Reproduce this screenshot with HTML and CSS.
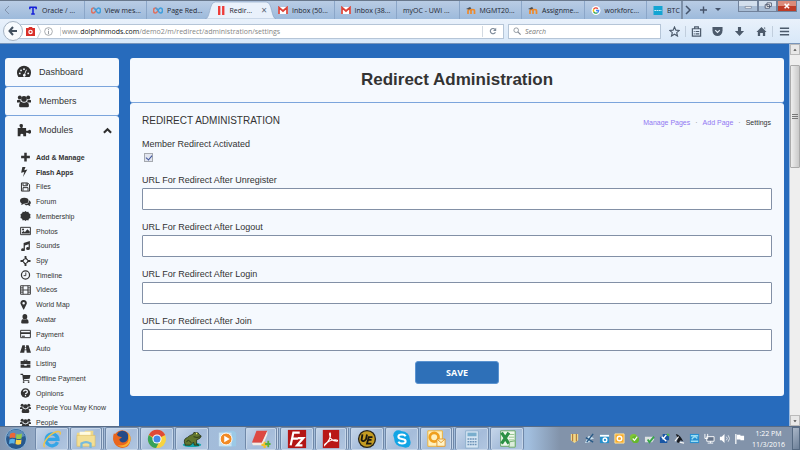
FILE: index.html
```html
<!DOCTYPE html>
<html lang="en">
<head>
    <meta charset="UTF-8">
    <meta name="viewport" content="width=device-width, initial-scale=1.0">
    <title>Redirect Administration</title>
    <link rel="stylesheet" href="styles.css">
</head>
<body>

    <!-- Shared icon shapes -->
    <svg class="sprite" aria-hidden="true">
        <symbol id="loop" viewBox="0 0 20 14"><path d="M10 7C8 3 6 2 5 2a4 5 0 0 0 0 10c2 0 3-2 5-5" fill="none" stroke="#e0705f" stroke-width="3"/><path d="M10 7c2-4 4-5 5-5a4 5 0 0 1 0 10c-2 0-3-1-5-5S6 2 5 2" fill="none" stroke="#3f9fdc" stroke-width="3"/></symbol>
        <symbol id="gmail" viewBox="0 0 20 16"><path fill="#fff" d="M1 1h18v14H1z"/><path d="M2 15V2l8 7 8-7v13" fill="none" stroke="#dd4338" stroke-width="3.4"/></symbol>
        <symbol id="moodle" viewBox="0 0 20 14"><path d="M4 14V8q0-3 3-3t3 3v6M10 14V8q0-3 3.500-3T17 8v6" fill="none" stroke="#ee8a2c" stroke-width="3.4"/><path fill="#4d4f52" d="M0 4l8-4 3 3-5 2z"/></symbol>
        <symbol id="group" viewBox="0 0 20 18"><circle cx="4" cy="4" r="2.800"/><circle cx="16" cy="4" r="2.800"/><circle cx="10" cy="6" r="4"/><path d="M0 11V8q2-1.500 5 0 0 2 1 3H2zM20 11V8q-2-1.500-5 0 0 2-1 3h4zM3 16q0-5 3-6 4 3 8 0 3 1 3 6 0 2-2 2H5q-2 0-2-2z"/></symbol>
    </svg>

    <!-- Browser tabs -->
    <nav class="tab-bar">
        <button class="scroll-tabs" aria-label="Scroll tabs left"><svg viewBox="0 0 8 10"><path d="M6 1L2 5l4 4" fill="none" stroke="#8294ad"/></svg></button>
        <div class="tabs">
            <button class="tab"><svg viewBox="0 0 10 10"><path d="M1 1.500h8M1.500 1v2.500M8.500 1v2.500M5 1v8M3 9h4" stroke="#1620d8" stroke-width="1.700"/></svg>Oracle / ...</button>
            <button class="tab"><svg><use href="#loop"/></svg>View mes...</button>
            <button class="tab no-line"><svg><use href="#loop"/></svg>Page Red...</button>
            <button class="tab active">
                <svg class="tab-shape" viewBox="0 0 76 18" preserveAspectRatio="none"><path d="M0 18C6 18 4 1 11 1h54c7 0 5 17 11 17z" fill="#e9f1fb" stroke="#8ea7c6" stroke-width=".7"/></svg>
                <svg viewBox="0 0 10 10"><path d="M3 0v10M7.500 0v10" stroke="#ee3b38" stroke-width="2.600"/></svg>Redir...<span class="close">×</span>
            </button>
            <button class="tab"><svg><use href="#gmail"/></svg>Inbox (50...</button>
            <button class="tab"><svg><use href="#gmail"/></svg>Inbox (38...</button>
            <button class="tab">myOC - UWI ...</button>
            <button class="tab"><svg><use href="#moodle"/></svg>MGMT20...</button>
            <button class="tab"><svg><use href="#moodle"/></svg>Assignme...</button>
            <button class="tab"><svg viewBox="0 0 20 20"><circle cx="10" cy="10" r="10" fill="#fff"/><g fill="none" stroke-width="3"><path d="M14 6a5.600 5.600 0 0 0-9 1" stroke="#ea4335"/><path d="M5 7a6 6 0 0 0 0 6" stroke="#fbbc05"/><path d="M5 13a5.600 5.600 0 0 0 8 2" stroke="#34a853"/><path d="M13 15q3-2 3-5h-6" stroke="#4285f4"/></g></svg>workforc...</button>
        </div>
        <button class="tab cut"><svg viewBox="0 0 10 10"><path fill="#14a5d3" d="M0 0h10v10H0z"/><path d="M1 5h8" stroke="#d6f4fb" stroke-dasharray="2 .5"/></svg>BTC :</button>
        <div class="tab-tools">
            <button aria-label="Scroll tabs right"><svg viewBox="0 0 10 10"><path d="M3 1l4 4-4 4" fill="none" stroke="#45536a" stroke-width="1.500"/></svg></button>
            <button aria-label="New tab"><svg viewBox="0 0 10 10"><path d="M2 5h7M5.500 1.500v7" stroke="#45536a" stroke-width="1.400"/></svg></button>
            <button aria-label="List all tabs"><svg viewBox="0 0 10 10"><path d="M2 3h6L5 6z" fill="#45536a"/></svg></button>
        </div>
        <div class="window-buttons">
            <button aria-label="Minimize"><svg viewBox="0 0 20 10"><path d="M7 5.500h7v2H7z" fill="#fff" stroke="#596579" stroke-width=".6"/></svg></button>
            <button aria-label="Restore"><svg viewBox="0 0 20 10"><path d="M9 1.500h5v4H9zM7 3.500h5v4H7z" fill="#fff" stroke="#495369"/></svg></button>
            <button class="close-window" aria-label="Close"><svg viewBox="0 0 20 10"><path d="M7.500 2.500l5 5m0-5l-5 5" stroke="#fff" stroke-width="1.800"/></svg></button>
        </div>
    </nav>

    <!-- Address bar -->
    <header class="toolbar">
        <button class="back" aria-label="Back"><svg viewBox="0 0 10 10"><path d="M9 5H2M5 1L1.500 5 5 9" fill="none" stroke="#42505f" stroke-width="2"/></svg></button>
        <div class="address">
            <svg class="badge" viewBox="0 0 10 10"><path fill="#d9302a" d="M0 1h3V0h4v1h3v9H0z"/><circle cx="5" cy="5.500" r="2.500" fill="#fff"/><circle cx="5" cy="5.500" r="1.200" fill="#d9302a"/></svg>
            <svg class="divider" viewBox="0 0 5 16"><path d="M0 0l4 8-4 8" fill="none" stroke="#b8c0c9"/></svg>
            <svg class="info" viewBox="0 0 10 10"><circle cx="5" cy="5" r="4.300" fill="none" stroke="#8b9095" stroke-width=".8"/><path d="M5 2v1.200M5 4.200V8" stroke="#8b9095"/></svg>
            <div class="url">www.<b>dolphinmods.com</b>/demo2/m/redirect/administration/settings</div>
            <button class="reload" aria-label="Reload"><svg viewBox="0 0 10 10"><path d="M8 6.500A3.300 3.300 0 1 1 7.500 3" fill="none" stroke="#7d8a99" stroke-width="1.500"/><path d="M9 1v4H5z" fill="#7d8a99"/></svg></button>
        </div>
        <div class="search">
            <svg viewBox="0 0 10 10"><circle cx="4" cy="4" r="2.900" fill="none" stroke="#7e8690"/><path d="M6 6l3.500 3.500" stroke="#7e8690" stroke-width="1.400"/></svg>
            <input type="search" aria-label="Search" placeholder="Search">
        </div>
        <div class="actions">
            <button aria-label="Bookmark"><svg viewBox="0 0 12 12"><path d="M6 1l1.500 3.500 3.800.3-2.900 2.500.9 3.700L6 9l-3.300 2 .9-3.700L.7 4.800l3.800-.3z" fill="none" stroke="#4c5a6b" stroke-width="1.200"/></svg></button>
            <button class="lined" aria-label="Bookmarks list"><svg viewBox="0 0 12 12"><path d="M1.500 3h9v8h-9zM4 3V1h4v2M3 6h1M5 6h4M3 8.500h1M5 8.500h4" fill="none" stroke="#4c5a6b" stroke-width="1.300"/></svg></button>
            <button aria-label="Pocket"><svg viewBox="0 0 12 12"><path d="M.5 1h11v4a5.500 6 0 0 1-11 0z" fill="#4c5a6b"/><path d="M3.500 4.500L6 7l2.500-2.500" fill="none" stroke="#e3edf8" stroke-width="1.400"/></svg></button>
            <button aria-label="Downloads"><svg viewBox="0 0 12 12"><path d="M4.300 1h3.400v4.500H11L6 11 1 5.500h3.300z" fill="#4c5a6b"/></svg></button>
            <button aria-label="Home"><svg viewBox="0 0 12 12"><path d="M6 1l5.500 5.500H10V11H7.500V7.500h-3V11H2V6.500H.5zM8.500 1.500H10V4z" fill="#4c5a6b"/></svg></button>
            <button class="lined menu" aria-label="Menu"><svg viewBox="0 0 12 12"><path d="M1 2.500h10M1 6h10M1 9.500h10" stroke="#4c5a6b" stroke-width="1.800"/></svg></button>
        </div>
    </header>

    <div class="viewport">
        <div class="page">
            <!-- Admin menu -->
            <aside class="sidebar">
                <a class="menu-item" href="#"><svg viewBox="0 0 20 16"><path d="M2 15A10 10 0 1 1 18 15z"/><g fill="#f5f9fe"><circle cx="4" cy="10" r="1.300"/><circle cx="5.800" cy="5.700" r="1.300"/><circle cx="10" cy="4" r="1.300"/><circle cx="16" cy="10" r="1.300"/><path d="M13 4.500l1 .5-2.500 6a2 2 0 1 1-1.200-.3z"/></g></svg>Dashboard</a>
                <a class="menu-item" href="#"><svg><use href="#group"/></svg>Members</a>
                <div class="modules">
                    <a class="menu-item" href="#"><svg viewBox="0 0 20 18"><path d="M1 6h4.500Q3.500 4 3.500 2.500q0-2 2.500-2t2.500 2Q8.500 4 7.500 6H13v4q2.500.5 3.500-.7 2-1.300 3.500.7v3q-1.500 2-3.500.7-1-1.200-3.500-.7v5H9q.8-3.500-2-3.500T5 18H1z"/></svg>Modules<svg class="chevron" viewBox="0 0 10 10"><path d="M1 7.500l4-4 4 4" fill="none" stroke="#2f2f2f" stroke-width="2.300"/></svg></a>
                    <ul class="submenu">
                        <li class="strong"><a href="#"><svg viewBox="0 0 16 16"><path d="M6 1h4v5h5v4h-5v5H6v-5H1V6h5z"/></svg>Add &amp; Manage</a></li>
                        <li class="strong"><a href="#"><svg viewBox="0 0 16 16"><path d="M3 0h5L6 5l5-1-7 12 2-8-5 1z"/></svg>Flash Apps</a></li>
                        <li><a href="#"><svg viewBox="0 0 16 16"><path d="M1.500 1.500h10l3 3v10h-13zM4 2v4h7V2M4 14V9h8v5M9 2v3" fill="none" stroke="#333" stroke-width="1.600"/></svg>Files</a></li>
                        <li><a href="#"><svg viewBox="0 0 18 16"><ellipse cx="7" cy="6" rx="7" ry="5"/><path d="M3 9l-1 4 5-2zM15 5c4 3 3 6 1 7l1 3-4-2c-3 .5-5-.5-6-1.500 5 0 8-2 8-6.500z"/></svg>Forum</a></li>
                        <li><a href="#"><svg viewBox="0 0 16 16"><path d="M8 0l2 1.500 2.500-.5 1 2.500L16 5l-.5 3 .5 3-2.500 1.500-1 2.500-2.500-.5L8 16l-2-1.500-2.500.5-1-2.500L0 11l.5-3L0 5l2.500-1.500 1-2.500L6 1.500z"/></svg>Membership</a></li>
                        <li><a href="#"><svg viewBox="0 0 18 16"><path d="M1 2h16v12H1z" fill="none" stroke="#333" stroke-width="1.600"/><circle cx="5" cy="5.500" r="1.700"/><path d="M3 12v-2l3-2 2 2 4-5 4 4v3z"/></svg>Photos</a></li>
                        <li><a href="#"><svg viewBox="0 0 16 16"><path d="M5 3l10-3v12a3 2.300 0 1 1-2-2V5L7 7v7a3 2.300 0 1 1-2-2z"/></svg>Sounds</a></li>
                        <li><a href="#"><svg viewBox="0 0 16 16"><path d="M8 3L13 8 8 13 3 8z" fill="none" stroke="#333" stroke-width="2" stroke-dasharray="5 2"/><path d="M6.500 0h3v5h-3zM6.500 11h3v5h-3zM0 6.500h5v3H0zM11 6.500h5v3h-5z"/></svg>Spy</a></li>
                        <li><a href="#"><svg viewBox="0 0 16 16"><circle cx="8" cy="8" r="6.500" fill="none" stroke="#333" stroke-width="2"/><path d="M8.500 4v5H5" fill="none" stroke="#333" stroke-width="1.500"/></svg>Timeline</a></li>
                        <li><a href="#"><svg viewBox="0 0 18 16"><path d="M1 1h16v14H1zM5 1v14M13 1v14M5 8h8M1 4.500h4M1 8h4M1 11.500h4M13 4.500h4M13 8h4M13 11.500h4" fill="none" stroke="#333" stroke-width="1.500"/></svg>Videos</a></li>
                        <li><a href="#"><svg viewBox="0 0 16 16"><path d="M5 0a5 5 0 0 1 5 6L5.500 15h-1L0 6a5 5 0 0 1 5-6zm0 3a2 2 0 1 0 0 4 2 2 0 0 0 0-4z"/></svg>World Map</a></li>
                        <li><a href="#"><svg viewBox="0 0 16 16"><ellipse cx="7" cy="4.500" rx="3.800" ry="4.500"/><path d="M1 13q0-4 3-5 3 3 6 0 3 1 3 5 0 2-2 2H3q-2 0-2-2z"/></svg>Avatar</a></li>
                        <li><a href="#"><svg viewBox="0 0 18 16"><path d="M1 2h16v12H1z" fill="none" stroke="#333" stroke-width="1.600"/><path d="M1 5h16v3H1zM3 11h5v1.300H3z"/></svg>Payment</a></li>
                        <li><a href="#"><svg viewBox="0 0 18 16"><path d="M4 2h4v3h2V2h4l4 12h-7l-.5-4h-3L7 14H0zM8 6l-.3 3h2.600L10 6z"/></svg>Auto</a></li>
                        <li><a href="#"><svg viewBox="0 0 18 16"><path d="M6 3V1h6v2h5v5H1V3zM7.500 3h3v-.8h-3zM1 9h6v2h4V9h6v5H1z"/></svg>Listing</a></li>
                        <li><a href="#"><svg viewBox="0 0 16 16"><path d="M0 1h4l.5 2H16l-1.500 6-9 1v1H14v1.500H4L3 3H0z"/><circle cx="5" cy="14.500" r="1.500"/><circle cx="13" cy="14.500" r="1.500"/></svg>Offline Payment</a></li>
                        <li><a href="#"><svg viewBox="0 0 16 16"><circle cx="8" cy="8" r="7.500"/><path d="M5 6q0-2.500 3-2.500T11 6q0 1.500-1.500 2.200T8 10M8 11v2" fill="none" stroke="#f5f9fe" stroke-width="2"/></svg>Opinions</a></li>
                        <li><a href="#"><svg><use href="#group"/></svg>People You May Know</a></li>
                        <li><a href="#"><svg><use href="#group"/></svg>People</a></li>
                    </ul>
                </div>
            </aside>

            <!-- Settings form -->
            <main class="content">
                <h1>Redirect Administration</h1>
                <section class="panel">
                    <div class="panel-head">
                        <h2>REDIRECT ADMINISTRATION</h2>
                        <div class="links"><a href="#">Manage Pages</a><span>·</span><a href="#">Add Page</a><span>·</span><a class="current" href="#">Settings</a></div>
                    </div>
                    <form>
                        <div class="check-field">
                            <label for="activated">Member Redirect Activated</label>
                            <input type="checkbox" id="activated" checked>
                        </div>
                        <div class="field">
                            <label for="unregister">URL For Redirect After Unregister</label>
                            <input type="text" id="unregister">
                        </div>
                        <div class="field">
                            <label for="logout">URL For Redirect After Logout</label>
                            <input type="text" id="logout">
                        </div>
                        <div class="field">
                            <label for="login">URL For Redirect After Login</label>
                            <input type="text" id="login">
                        </div>
                        <div class="field">
                            <label for="join">URL For Redirect After Join</label>
                            <input type="text" id="join">
                        </div>
                        <button type="button" class="save">SAVE</button>
                    </form>
                </section>
            </main>
        </div>
        <div class="scrollbar">
            <button aria-label="Scroll up"><svg viewBox="0 0 10 10"><path d="M3 6l2-2.500L7 6z" fill="#444"/></svg></button>
            <div class="thumb"><svg viewBox="0 0 6 6"><path d="M0 .5h6M0 2.500h6M0 4.500h6" stroke="#777" stroke-width="1"/></svg></div>
            <button aria-label="Scroll down"><svg viewBox="0 0 10 10"><path d="M3 4l2 2.500L7 4z" fill="#444"/></svg></button>
        </div>
    </div>

    <!-- Taskbar -->
    <footer class="taskbar">
        <button class="start" aria-label="Start"><svg viewBox="0 0 22 22"><circle cx="11" cy="11" r="10.500" fill="#28588d" stroke="#8bb5d9"/><path d="M2 8a9.500 9.500 0 0 1 18 0q-9 4-18 0z" fill="#75a3cb" opacity=".7"/><path d="M5 6q3-2 5.500-.5L10 10q-3-1-5.500.5z" fill="#ed6736"/><path d="M11.500 6q2.500 1 5.500-.5l-.5 5q-3 1-5.500 0z" fill="#93c94b"/><path d="M4.500 11.500q3-1.500 5.500-.3l-.5 4.500Q7 14.500 4 16z" fill="#57b1e8"/><path d="M11 11.500q2.500 1 5.500 0L16 16q-3 1.500-5.500 0z" fill="#fbd04b"/></svg></button>
        <button class="app" aria-label="Internet Explorer"><svg viewBox="0 0 22 22"><path d="M17 14.500a6.500 6.500 0 1 1 .5-3H6" fill="none" stroke="#35a5e6" stroke-width="3.600"/><path d="M3 20C-1 17 8 5 16 3q5-1 4 3" fill="none" stroke="#efc44c" stroke-width="1.700"/></svg></button>
        <button class="app stacked" aria-label="Explorer"><svg viewBox="0 0 22 22"><path d="M1 4h8l1-2h9v14H1z" fill="#eed889"/><path d="M4 3h12v9H4z" fill="#fffbe0"/><path d="M1 7h20v12H1z" fill="#f3df95" stroke="#dcbc62" stroke-width=".7"/><path d="M6 21v-5q5-3 10 0v5" fill="none" stroke="#76badc" stroke-width="2.500"/></svg></button>
        <button class="app" aria-label="Firefox"><svg viewBox="0 0 22 22"><circle cx="11" cy="11" r="9.500" fill="#e7651b"/><circle cx="11.500" cy="8.500" r="6.500" fill="#254b88"/><path d="M2 5q3 0 5 3l4 1q-2 2-3 2 1 5 6 4 4-1 5-6 3 8-4 11-8 2-12-4-3-5-1-11z" fill="#e9661e"/><path d="M18 4q5 7 0 13-5 5-12 1 10 1 12-5z" fill="#fbb431"/></svg></button>
        <button class="app" aria-label="Chrome"><svg viewBox="0 0 22 22"><circle cx="11" cy="11" r="10" fill="#f7d341"/><path d="M11 11L2 6.500a10 10 0 0 1 18 0z" fill="#df4937"/><path d="M2 6.500a10 10 0 0 0 8 14.500l4-8-5-1z" fill="#38a25a"/><circle cx="11" cy="11" r="5" fill="#fff"/><circle cx="11" cy="11" r="3.900" fill="#4389e8"/></svg></button>
        <button class="app" aria-label="Toad"><svg viewBox="0 0 26 22"><ellipse cx="13" cy="18.500" rx="12" ry="3" fill="#14a7ad"/><path d="M4 18q-3-7 3-9 3-3 7-4 1-4 4-2 4-1 4 2l3 2q-1 4-6 5v6l3 1h-6l-1-4-4 4H4z" fill="#61762f" stroke="#202b12"/><circle cx="19" cy="4" r="1" fill="#fff36e"/><path d="M15 8q4 2 9 0M6 15q2-5 6 1" fill="none" stroke="#202b12"/></svg></button>
        <button class="app plain" aria-label="Media Player"><svg viewBox="0 0 22 22"><path d="M4 3l14-1 3 2v15l-15 1z" fill="#9bc9e7"/><path d="M2 4h14v15H2z" fill="#c9e3f3"/><circle cx="10" cy="11" r="6.500" fill="#f18a26" stroke="#fff"/><path d="M8 7.500l6 3.500-6 3.500z" fill="#fff"/></svg></button>
        <button class="app stacked" aria-label="Notes"><svg viewBox="0 0 22 22"><path d="M6 2h12l-6 13H1z" fill="#dd4943"/><path d="M1 15h11l6-13v4l-5 12H2z" fill="#f5ece3"/><path d="M15 14v7M11.500 17.500h7" stroke="#f1c12c" stroke-width="2.500"/><path d="M19 13v7M15.500 16.500h6" stroke="#56ae3f" stroke-width="2"/></svg></button>
        <button class="app" aria-label="FileZilla"><svg viewBox="0 0 22 22"><path d="M1 1h20v20H1z" fill="#b31515"/><path d="M4 18L7 4h7M5.500 10.500H12M12 10h6l-7 8h6" fill="none" stroke="#fff" stroke-width="2.400"/></svg></button>
        <button class="app stacked" aria-label="Adobe Reader"><svg viewBox="0 0 22 22"><path d="M2 1h18v20H2z" fill="#b91818"/><path d="M4 18Q11 11 10.500 5.500 10 3 9.300 5.500q.7 8 8.200 8 2-1.500-2-1.700Q9 12 4 17z" fill="none" stroke="#fff" stroke-width="1.200"/></svg></button>
        <button class="app" aria-label="UltraEdit"><svg viewBox="0 0 22 22"><circle cx="11" cy="11" r="10" fill="#272318"/><circle cx="11" cy="11" r="8.500" fill="#c49c22"/><path d="M6 6l-1 6q2 3 5-1l1-5M17 9h-4l-2 7h5M12.500 12H16" fill="none" stroke="#191711" stroke-width="2"/></svg></button>
        <button class="app" aria-label="Skype"><svg viewBox="0 0 22 22"><circle cx="11" cy="11" r="8.500" fill="#12a5e5"/><circle cx="7" cy="7" r="5.500" fill="#12a5e5"/><circle cx="15" cy="15" r="5.500" fill="#12a5e5"/><path d="M15 8q-1-2-4-2-4 0-4 2.500 0 2 4 2.500t4 2.500q0 2.500-4 2.500-3 0-4-2" fill="none" stroke="#fff" stroke-width="2.200"/></svg></button>
        <button class="app stacked" aria-label="Outlook"><svg viewBox="0 0 22 22"><path d="M2 2h16v17H2z" fill="#fff0bd" stroke="#f2b02c"/><circle cx="9" cy="9" r="4.800" fill="none" stroke="#ef9f1d" stroke-width="3"/><path d="M12 11h9v8h-9z" fill="#fff3c7" stroke="#e1982c"/><path d="M12 11l4.500 4 4.500-4" fill="none" stroke="#e1982c"/></svg></button>
        <button class="app" aria-label="Calculator"><svg viewBox="0 0 22 22"><path d="M4 2h14v19H4z" fill="#d5e5f3" stroke="#8caecb"/><path d="M6 4h10v4H6z" fill="#79aecd"/><path d="M6 11h10M6 14h10M6 17h10" stroke="#6e94b8" stroke-width="1.800" stroke-dasharray="2 .7"/></svg></button>
        <button class="app" aria-label="Excel"><svg viewBox="0 0 22 22"><path d="M4 2h16v17H4z" fill="#f1f8ee" stroke="#5da35d"/><path d="M13 6h6M13 9h6M13 12h6" stroke="#8bc184"/><path d="M5 4l8 12M13 4L5 16" stroke="#2b9144" stroke-width="3.400"/><path d="M14 14l6-1v7h-7z" fill="#dceddb" stroke="#69aa68"/></svg></button>
        <div class="tray">
            <svg viewBox="0 0 12 12"><path d="M2 1h8v7l-4 3-4-3z" fill="#f0d98a"/><path d="M4 1v8M8 1v8" stroke="#a3602a"/></svg>
            <svg viewBox="0 0 12 12"><path d="M1 11l4-8 3 1 3 2-4 1-1 3z" fill="#cce4f2"/><path d="M3 10l7-9M2 5l8 5" stroke="#285a87" stroke-width="1.500"/></svg>
            <svg viewBox="0 0 12 12"><path d="M1 2h10v9H1z" fill="#2690cc"/><path d="M1 2h10v2H1z" fill="#fff"/><circle cx="6.500" cy="7.500" r="2" fill="none" stroke="#fff" stroke-width="1.500"/></svg>
            <svg viewBox="0 0 12 12"><path d="M1 1h10v10H1z" fill="#f7ac2c" stroke="#ffe5a2"/><circle cx="6" cy="6" r="2.500" fill="none" stroke="#fff" stroke-width="1.500"/></svg>
            <svg viewBox="0 0 12 12"><circle cx="5" cy="5" r="4" fill="#7fc636"/><circle cx="7" cy="7" r="4" fill="#66b82c"/><path d="M4 6l2 2 3-4" fill="none" stroke="#fff" stroke-width="1.300"/></svg>
            <svg viewBox="0 0 12 12"><path d="M1 4h9l1 3-2 3H1z" fill="#dce1e2"/><path d="M4 7l2 3 5-6" fill="none" stroke="#36a548" stroke-width="2"/></svg>
            <svg viewBox="0 0 12 12"><path d="M1 4h8v7H1zM4 1h7v7H4z" fill="#1856a5"/><path d="M3 4l5 5M8 2L4 7" stroke="#fff" stroke-width="1.500"/><path d="M9 1l2 2" stroke="#58bc4b" stroke-width="2"/></svg>
            <svg viewBox="0 0 12 12"><path d="M2 1q5 1 8 8L7 8l-1 3-3-1 1-4z" fill="#171a20"/><path d="M1 9l4-5M6 10l5 1" stroke="#f4f4f4" stroke-width="1.300"/></svg>
            <svg viewBox="0 0 12 12"><path d="M1 1h10v10H1z" fill="#268fd0"/><path d="M2 3h8M2 9h8M3 7q3-5 6-1" fill="none" stroke="#9bdef3" stroke-width="1.500"/></svg>
            <svg viewBox="0 0 12 12"><path d="M3 4h8v5H3z" fill="#65748a" stroke="#fff"/><path d="M1 1v5h3V1M4 11h6M7 9v2" fill="none" stroke="#fff"/></svg>
            <svg viewBox="0 0 12 12"><path d="M1 4h2l3-3v10L3 8H1z" fill="#fff"/><path d="M8 4q2 2 0 4M10 2.500q3 3.500 0 7" fill="none" stroke="#e4e9ef"/></svg>
            <svg viewBox="0 0 12 12"><path d="M2 1v11" stroke="#fff" stroke-width="1.300"/><path d="M3 2h4v1h4v5H7V7H3z" fill="#fff"/></svg>
        </div>
        <div class="clock">1:22 PM<br>11/3/2016</div>
        <button class="show-desktop" aria-label="Show desktop"></button>
    </footer>

</body>
</html>
```
FILE: styles.css
```css
* {
    box-sizing: border-box;
}
body {
    margin: 0;
    height: 100vh;
    display: flex;
    flex-direction: column;
    overflow: hidden;
    font-family: "Liberation Sans", Arial, sans-serif;
    color: #333;
    background: #276bbc;
}
button {
    margin: 0;
    padding: 0;
    border: none;
    background: none;
    color: inherit;
    font: inherit;
}
a {
    color: inherit;
    text-decoration: none;
}
svg {
    display: block;
    flex: none;
}
.sprite {
    position: absolute;
    width: 0;
    height: 0;
}

/* Tabs */
.tab-bar {
    display: flex;
    flex: none;
    height: 19px;
    border-top: 1px solid #69788c;
    background: linear-gradient(#b9cce4, #9dbadb);
    font-family: "Open Sans", sans-serif;
    font-size: 7px;
    color: #1c2530;
}
.scroll-tabs {
    width: 22px;
    padding-left: 3px;
}
.scroll-tabs svg {
    width: 8px;
    height: 10px;
}
.tabs {
    flex: 1;
    display: flex;
    min-width: 0;
}
.tab {
    position: relative;
    flex: 1 1 0;
    min-width: 0;
    display: flex;
    align-items: center;
    gap: 4px;
    padding: 0 0 0 6px;
    border-right: 1px solid #8ba6c8;
    white-space: nowrap;
}
.tab svg {
    width: 10px;
    height: 9px;
}
.tab.no-line {
    border-color: transparent;
}
.tab.active {
    z-index: 1;
    border-color: transparent;
}
.tab.active .tab-shape {
    position: absolute;
    top: 0;
    left: -5px;
    width: calc(100% + 10px);
    height: 18px;
    z-index: -1;
}
.close {
    margin-left: auto;
    padding-right: 4px;
    font-size: 10px;
    color: #5c6776;
}
.tab.cut {
    flex: none;
    width: 36px;
    overflow: hidden;
    border-right: 2px solid #7d90a9;
}
.tab-tools {
    display: flex;
    align-items: center;
    width: 55px;
}
.tab-tools button {
    width: 15px;
}
.tab-tools svg {
    width: 10px;
    height: 10px;
}
.window-buttons {
    display: flex;
    width: 62px;
    height: 11px;
    padding-right: 3px;
}
.window-buttons button {
    flex: 1;
    border: 1px solid #71829b;
    border-top: none;
    background: linear-gradient(#d3dfed 50%, #a9bdd5 50%);
}
.window-buttons svg {
    width: 100%;
    height: 10px;
}
.window-buttons .close-window {
    background: linear-gradient(#dc8b7a 50%, #be3b26 50%);
}

/* Address bar */
.toolbar {
    display: flex;
    flex: none;
    align-items: center;
    height: 25px;
    padding: 0 3px;
    border-bottom: 1px solid #7895ba;
    background: linear-gradient(#e9f1fb, #d8e8f8);
    font-family: "Open Sans", sans-serif;
    font-size: 7px;
}
.back {
    position: relative;
    z-index: 1;
    width: 20px;
    height: 20px;
    padding: 4px;
    border: 1px solid #a5b3c3;
    border-radius: 50%;
    background: #f7fafd;
}
.back svg {
    width: 10px;
    height: 10px;
}
.address {
    flex: 1;
    display: flex;
    align-items: center;
    height: 15px;
    margin-left: -5px;
    padding-left: 7px;
    border: 1px solid #b5c5d7;
    background: #fff;
}
.badge {
    width: 9px;
    height: 9px;
}
.divider {
    width: 5px;
    height: 13px;
    margin: 0 2px;
}
.info {
    width: 9px;
    height: 9px;
}
.url {
    flex: 1;
    margin-left: 7px;
    padding-left: 1px;
    border-left: 1px solid #d8dde3;
    color: #858585;
}
.url b {
    font-weight: 400;
    color: #111;
}
.reload {
    height: 11px;
    padding: 0 6px;
    border-left: 1px solid #d3dae2;
}
.reload svg {
    width: 8px;
    height: 8px;
}
.search {
    display: flex;
    align-items: center;
    gap: 4px;
    width: 153px;
    height: 15px;
    margin-left: 4px;
    padding-left: 4px;
    border: 1px solid #b5c5d7;
    background: #fff;
}
.search svg {
    width: 8px;
    height: 8px;
}
.search input {
    flex: 1;
    min-width: 0;
    padding: 0;
    border: none;
    outline: none;
    background: none;
    font: inherit;
}
.search input::placeholder {
    font-style: italic;
    color: #777;
}
.actions {
    display: flex;
    align-items: center;
    width: 136px;
    padding-left: 2px;
}
.actions button {
    flex: 1;
    display: flex;
    justify-content: center;
    border-left: 1px solid transparent;
}
.actions svg {
    width: 11px;
    height: 11px;
}
.actions .lined {
    border-color: #c1cedd;
}
.actions .menu {
    flex: none;
    width: 25px;
}

/* Page area */
.viewport {
    flex: 1;
    min-height: 0;
    display: flex;
}
.page {
    flex: 1;
    display: flex;
    align-items: flex-start;
    gap: 11px;
    padding: 14px 5px 0;
    overflow: hidden;
    border-right: 1px solid #9dbbe0;
}
.sidebar {
    width: 114px;
    flex: none;
    display: flex;
    flex-direction: column;
}
.sidebar > * {
    border-radius: 3px;
    background: #f5f9fe;
}
.sidebar > .menu-item {
    height: 29px;
    border-bottom: 1px solid #7ba5dc;
}
.menu-item {
    display: flex;
    align-items: center;
    gap: 8px;
    height: 28px;
    padding: 0 7px 0 12px;
    font-size: 9px;
}
.menu-item svg {
    width: 14px;
    height: 14px;
    fill: #2f2f2f;
}
.menu-item .chevron {
    width: 9px;
    height: 9px;
    margin-left: auto;
}
.modules {
    padding-bottom: 4px;
}
.submenu {
    display: grid;
    grid-auto-rows: 1fr;
    height: 280px;
    margin: 6px 0 0;
    padding: 0 0 0 15px;
    list-style: none;
    font-size: 7px;
}
.submenu a {
    display: flex;
    align-items: center;
    gap: 5px;
    height: 100%;
}
.submenu svg {
    width: 11px;
    height: 10px;
    fill: #333;
}
.submenu .strong {
    font-weight: bold;
}

/* Settings */
.content {
    flex: 1;
    min-width: 0;
}
h1 {
    margin: 0;
    border-bottom: 1px solid #7ba5dc;
    border-radius: 3px;
    background: #f5f9fe;
    font-size: 17px;
    line-height: 44px;
    text-align: center;
}
.panel {
    padding: 9px 12px 12px;
    border-radius: 3px;
    background: #f5f9fe;
}
.panel-head {
    display: flex;
    align-items: center;
    justify-content: space-between;
    height: 16px;
}
h2 {
    margin: 0;
    font-size: 10px;
    font-weight: 400;
}
.links {
    display: flex;
    gap: 5px;
    padding: 4px 1px 0 0;
    font-size: 7px;
    color: #9177f2;
}
.links .current {
    color: #333;
}
.links span {
    color: #888;
}
label {
    display: block;
    font-size: 9px;
    line-height: 15px;
}
.check-field {
    margin: 9px 0 11px;
}
.check-field input {
    display: block;
    width: 9px;
    height: 9px;
    margin: 1px 0 0 2px;
    appearance: none;
    border: 1px solid #a5a9af;
    background: #e1e5ef;
    position: relative;
}
.check-field input:checked::after {
    content: "";
    position: absolute;
    left: 2px;
    top: 0;
    width: 3px;
    height: 5px;
    border: solid #3d539b;
    border-width: 0 1px 1px 0;
    transform: rotate(40deg);
}
.field {
    margin-bottom: 10px;
}
.field input {
    display: block;
    width: 100%;
    height: 22px;
    padding: 0 6px;
    border: 1px solid #8290a6;
    border-radius: 1px;
    background: #fff;
    font: inherit;
    font-size: 9px;
}
.save {
    display: block;
    width: 84px;
    height: 23px;
    margin: 0 auto;
    border: 1px solid #5b93d0;
    border-radius: 3px;
    background: #2e70b8;
    color: #fff;
    font-family: "Open Sans", sans-serif;
    font-size: 9px;
    font-weight: bold;
}

/* Scrollbar */
.scrollbar {
    width: 10px;
    flex: none;
    display: flex;
    flex-direction: column;
    background: #eee;
}
.scrollbar button {
    height: 11px;
    border: 1px solid #bbb;
    background: #e8e8e8;
}
.scrollbar button svg {
    width: 8px;
    height: 8px;
}
.thumb {
    flex: 0 0 27%;
    display: flex;
    align-items: center;
    justify-content: center;
    margin: 10px 0 auto;
    border: 1px solid #aaa;
    border-radius: 1px;
    background: linear-gradient(90deg, #eee, #c9c9c9);
}
.thumb svg {
    width: 6px;
    height: 6px;
}

/* Taskbar */
.taskbar {
    display: flex;
    flex: none;
    height: 24px;
    border-top: 1px solid #586c86;
    background: linear-gradient(90deg, #8195b0, #a3bbd8 8%, #a2bfdf 66%, #8293aa 70%);
}
.start {
    width: 35px;
    padding-left: 5px;
}
.start svg {
    width: 22px;
    height: 22px;
}
.app {
    display: flex;
    align-items: center;
    justify-content: center;
    flex: none;
    width: 34px;
    margin-right: 1px;
    border: 1px solid #7088a8;
    border-bottom: none;
    border-radius: 2px;
    background: linear-gradient(135deg, #c6d6ea, #a5bcda 55%, #b2c7e1);
    box-shadow: inset 0 0 0 1px #c6d6e9;
}
.app svg {
    width: 20px;
    height: 20px;
}
.app.stacked {
    width: 32px;
    margin-right: 3px;
    box-shadow: inset 0 0 0 1px #c6d6e9, 1px 0 #c6d6e9, 2px 0 #7088a8;
}
.app.plain {
    border-color: transparent;
    background: none;
    box-shadow: none;
}
.tray {
    display: flex;
    align-items: center;
    gap: 4px;
    margin-left: auto;
}
.tray svg {
    width: 11px;
    height: 11px;
}
.clock {
    width: 47px;
    padding-top: 1px;
    font-family: "Open Sans", sans-serif;
    font-size: 7px;
    line-height: 11px;
    text-align: center;
    color: #fff;
}
.show-desktop {
    width: 8px;
    border: 1px solid #566a82;
    background: linear-gradient(135deg, #a9b6c7, #6d8099);
}
```
